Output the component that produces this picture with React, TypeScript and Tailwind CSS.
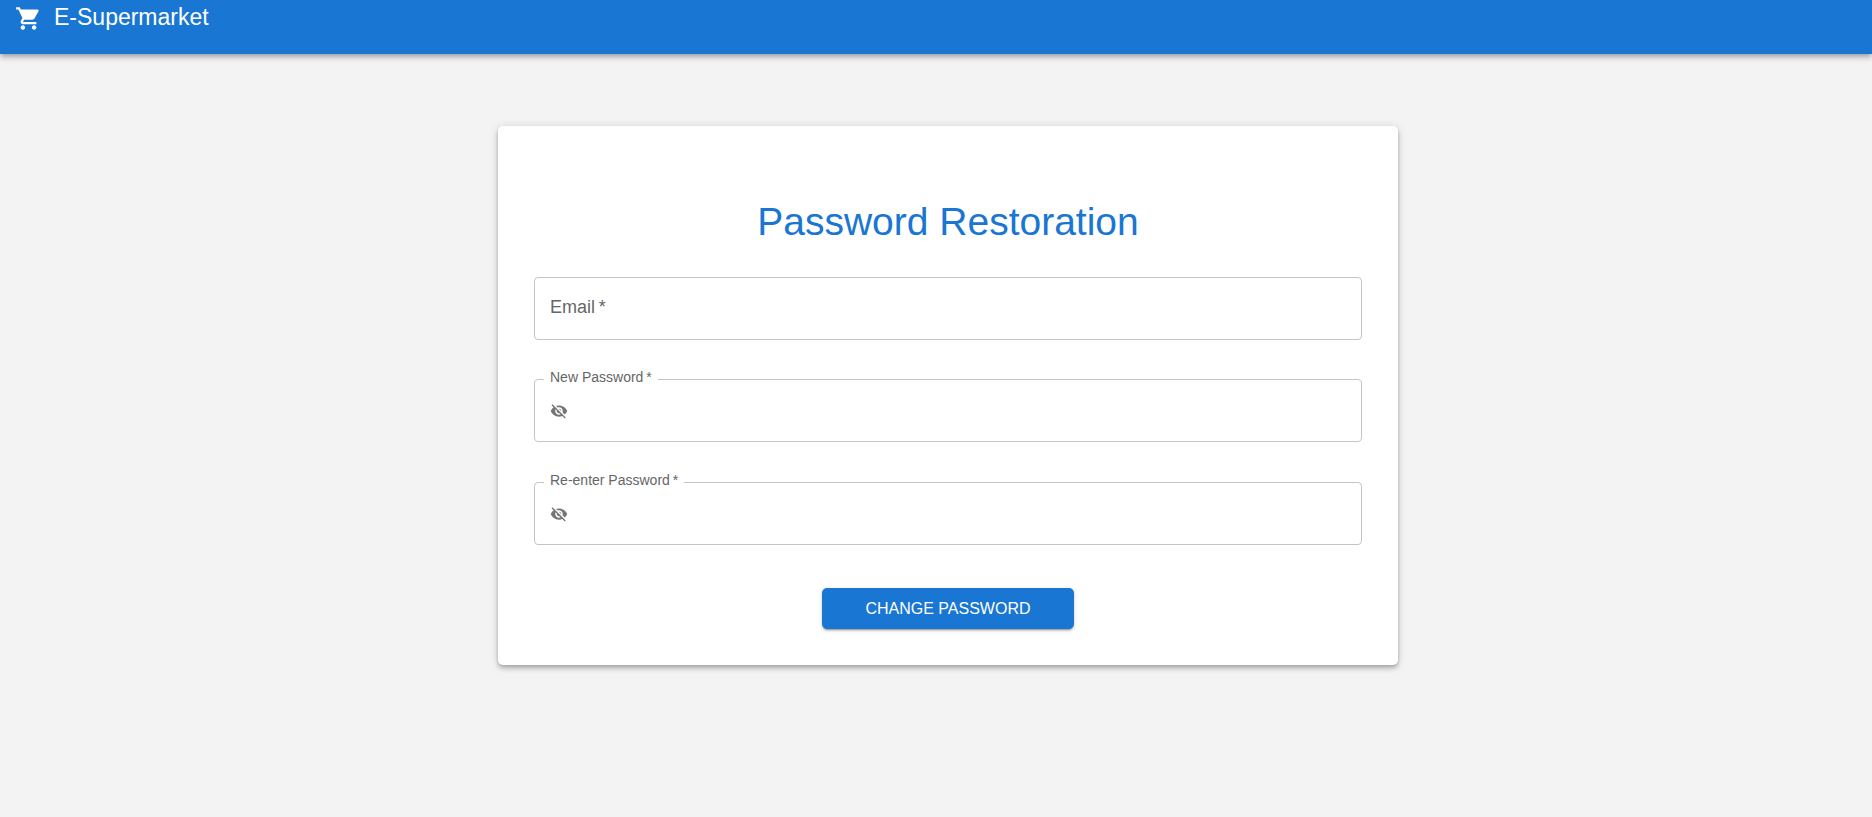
import { useState } from "react";
import { MdShoppingCart, MdVisibility, MdVisibilityOff } from "react-icons/md";

function EmailField() {
  const [value, setValue] = useState("");
  return (
    <div className="relative mb-[39px] flex h-[63px] items-center rounded border border-[#c4c4c4] px-[15px] focus-within:border-[#1976d2]">
      <input
        id="email"
        type="email"
        required
        value={value}
        onChange={(e) => setValue(e.target.value)}
        placeholder=" "
        className="peer h-7 w-full bg-transparent text-[18px] text-black/85 outline-none"
      />
      <label
        htmlFor="email"
        className="pointer-events-none absolute -top-[13px] left-[9px] bg-white px-1.5 text-[14px] leading-5 text-[#666666] peer-placeholder-shown:peer-not-focus:top-[15px] peer-placeholder-shown:peer-not-focus:text-[18px] peer-placeholder-shown:peer-not-focus:leading-7"
      >
        Email{"\u2009"}*
      </label>
    </div>
  );
}

function PasswordField({ id, label }: { id: string; label: string }) {
  const [visible, setVisible] = useState(false);
  const [value, setValue] = useState("");
  return (
    <div className="relative mb-10 flex h-[63px] items-center gap-2 rounded border border-[#c4c4c4] px-[15px] focus-within:border-[#1976d2]">
      <label
        htmlFor={id}
        className="absolute -top-[13px] left-[9px] bg-white px-1.5 text-[14px] leading-5 text-[#666666]"
      >
        {label}
        {"\u2009"}*
      </label>
      <button
        type="button"
        aria-label={visible ? "Hide password" : "Show password"}
        onClick={() => setVisible(!visible)}
        className="text-[#757575]"
      >
        {visible ? <MdVisibility size={18} /> : <MdVisibilityOff size={18} />}
      </button>
      <input
        id={id}
        type={visible ? "text" : "password"}
        required
        value={value}
        onChange={(e) => setValue(e.target.value)}
        className="h-7 w-full bg-transparent text-[18px] text-black/85 outline-none"
      />
    </div>
  );
}

export default function App() {
  return (
    <div className="flex min-h-screen flex-col bg-[#f3f3f3] font-['Liberation_Sans',Arial,sans-serif]">
      <header className="flex h-[54px] items-start gap-3 bg-[#1976d2] px-[15px] text-white shadow-[0px_2px_4px_-1px_rgba(0,0,0,0.2),0px_4px_5px_0px_rgba(0,0,0,0.14),0px_1px_10px_0px_rgba(0,0,0,0.12)]">
        <MdShoppingCart size={27} className="mt-[5px]" />
        <span className="pt-px text-[23px] leading-8">E-Supermarket</span>
      </header>
      <main className="flex justify-center pt-[72px] pl-6">
        <form
          onSubmit={(e) => e.preventDefault()}
          className="flex w-full max-w-[900px] flex-col rounded-[5px] bg-white px-9 pt-[72px] pb-9 shadow-[0px_2px_4px_-1px_rgba(0,0,0,0.2),0px_4px_5px_0px_rgba(0,0,0,0.14),0px_1px_10px_0px_rgba(0,0,0,0.12)]"
        >
          <h1 className="mb-[31px] text-center text-[39px] leading-12 text-[#1976d2]">
            Password Restoration
          </h1>
          <EmailField />
          <PasswordField id="new-password" label="New Password" />
          <PasswordField id="confirm-password" label="Re-enter Password" />
          <button
            type="submit"
            className="mt-[3px] h-[41px] w-[252px] self-center rounded-[5px] bg-[#1976d2] text-[16px] text-white uppercase shadow-[0px_3px_1px_-2px_rgba(0,0,0,0.2),0px_2px_2px_0px_rgba(0,0,0,0.14),0px_1px_5px_0px_rgba(0,0,0,0.12)] hover:bg-[#1565c0]"
          >
            Change Password
          </button>
        </form>
      </main>
    </div>
  );
}
